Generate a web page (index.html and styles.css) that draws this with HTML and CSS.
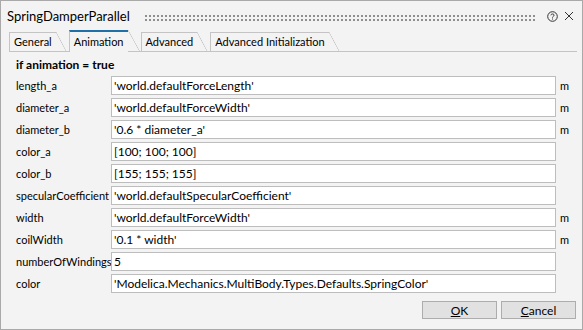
FILE: index.html
```html
<!DOCTYPE html>
<html lang="en">
<head>
    <meta charset="UTF-8">
    <title>SpringDamperParallel</title>
    <link rel="stylesheet" href="styles.css">
</head>
<body>
    <div class="dialog">
        <div class="titlebar">
            <span class="title">SpringDamperParallel</span>
            <span class="grip"></span>
            <svg class="help" width="11" height="11" viewBox="0 0 11 11">
                <circle cx="5.5" cy="5.5" r="4.8" fill="none" stroke="#333" stroke-width="1"/>
                <path d="M3.9 4.3 C3.9 2.6 7.1 2.6 7.1 4.2 C7.1 5.3 5.5 5.3 5.5 6.6" fill="none" stroke="#333" stroke-width="1"/>
                <rect x="5" y="7.5" width="1" height="1" fill="#333"/>
            </svg>
            <svg class="close" width="10" height="10" viewBox="0 0 10 10">
                <path d="M1 1 L9 9 M9 1 L1 9" stroke="#333" stroke-width="1"/>
            </svg>
        </div>

        <div class="tabs">
            <div class="tab">General</div>
            <div class="tab active">Animation</div>
            <div class="tab">Advanced</div>
            <div class="tab">Advanced Initialization</div>
        </div>

        <div class="panel">
            <div class="group-title">if animation = true</div>
            <div class="params">
                <label>length_a</label>
                <input type="text" value="'world.defaultForceLength'">
                <span class="unit">m</span>

                <label>diameter_a</label>
                <input type="text" value="'world.defaultForceWidth'">
                <span class="unit">m</span>

                <label>diameter_b</label>
                <input type="text" value="'0.6 * diameter_a'">
                <span class="unit">m</span>

                <label>color_a</label>
                <input type="text" value="[100; 100; 100]">
                <span class="unit"></span>

                <label>color_b</label>
                <input type="text" value="[155; 155; 155]">
                <span class="unit"></span>

                <label>specularCoefficient</label>
                <input type="text" value="'world.defaultSpecularCoefficient'">
                <span class="unit"></span>

                <label>width</label>
                <input type="text" value="'world.defaultForceWidth'">
                <span class="unit">m</span>

                <label>coilWidth</label>
                <input type="text" value="'0.1 * width'">
                <span class="unit">m</span>

                <label>numberOfWindings</label>
                <input type="text" value="5">
                <span class="unit"></span>

                <label>color</label>
                <input type="text" value="'Modelica.Mechanics.MultiBody.Types.Defaults.SpringColor'">
                <span class="unit"></span>
            </div>
        </div>

        <div class="footer">
            <button type="button"><u>O</u>K</button>
            <button type="button"><u>C</u>ancel</button>
        </div>
    </div>
</body>
</html>
```

FILE: styles.css
```css
:root {
    --bg: #f3f3f3;
    --border: #c4c4c4;
    --text: #000000;
    --accent: #1f6fa8;
}

body {
    margin: 0;
    font-family: Lato, "Noto Sans", sans-serif;
    font-size: 12px;
    color: var(--text);
    background: var(--bg);
}

.dialog {
    width: 583px;
    height: 330px;
    box-sizing: border-box;
    border: 1px solid #a9a9a9;
    background: var(--bg);
    display: flex;
    flex-direction: column;
}

.titlebar {
    height: 30px;
    display: flex;
    align-items: center;
    padding: 0 8px 0 6px;
}

.title {
    font-size: 13px;
    margin-right: 14px;
}

.grip {
    flex: 1;
    height: 7px;
    margin-top: 3px;
    margin-right: 12px;
    background-image: radial-gradient(circle, #8c8c8c 0.7px, transparent 1px);
    background-size: 4px 4px;
}

.help {
    margin-right: 6px;
}

.tabs {
    display: flex;
    align-items: flex-end;
    height: 20px;
    margin: 0 5px 0 8px;
    border-bottom: 1px solid var(--border);
    font-size: 11px;
}

.tab {
    position: relative;
    height: 18px;
    line-height: 18px;
    padding: 0 4px 0 4px;
    margin-right: 13px;
    border-top: 1px solid var(--border);
    border-left: 1px solid var(--border);
}

.tab::after {
    content: '';
    position: absolute;
    top: -1px;
    right: -10px;
    width: 10px;
    height: 19px;
    background: linear-gradient(to top right, transparent calc(50% - 0.6px), var(--border) 50%, transparent calc(50% + 0.6px));
}

.tab.active {
    height: 19px;
    line-height: 19px;
    border-top: 2px solid var(--accent);
    margin-bottom: -1px;
    padding-bottom: 1px;
    background: var(--bg);
}

.tab.active::after {
    top: -2px;
    height: 22px;
    width: 12px;
    right: -12px;
}

.panel {
    flex: 1;
    padding: 5px 0 0 15px;
}

.group-title {
    font-weight: bold;
    height: 19px;
    line-height: 16px;
}

.params {
    display: grid;
    grid-template-columns: 95px 445px auto;
    grid-auto-rows: 19px;
    row-gap: 3px;
    align-items: center;
}

.params label {
    font-size: 11px;
    white-space: nowrap;
}

.params input {
    height: 19px;
    box-sizing: border-box;
    margin: 0;
    padding: 0 2px;
    border: 1px solid #bdbdbd;
    background: #ffffff;
    font-family: inherit;
    font-size: 12px;
    color: var(--text);
}

.unit {
    padding-left: 4px;
    font-size: 11px;
}

.footer {
    display: flex;
    justify-content: flex-end;
    gap: 4px;
    padding: 0 6px 10px 0;
}

.footer button {
    width: 75px;
    height: 18px;
    padding: 0;
    border: 1px solid #adadad;
    background: #e1e1e1;
    font-family: inherit;
    font-size: 12px;
    color: var(--text);
}
```
